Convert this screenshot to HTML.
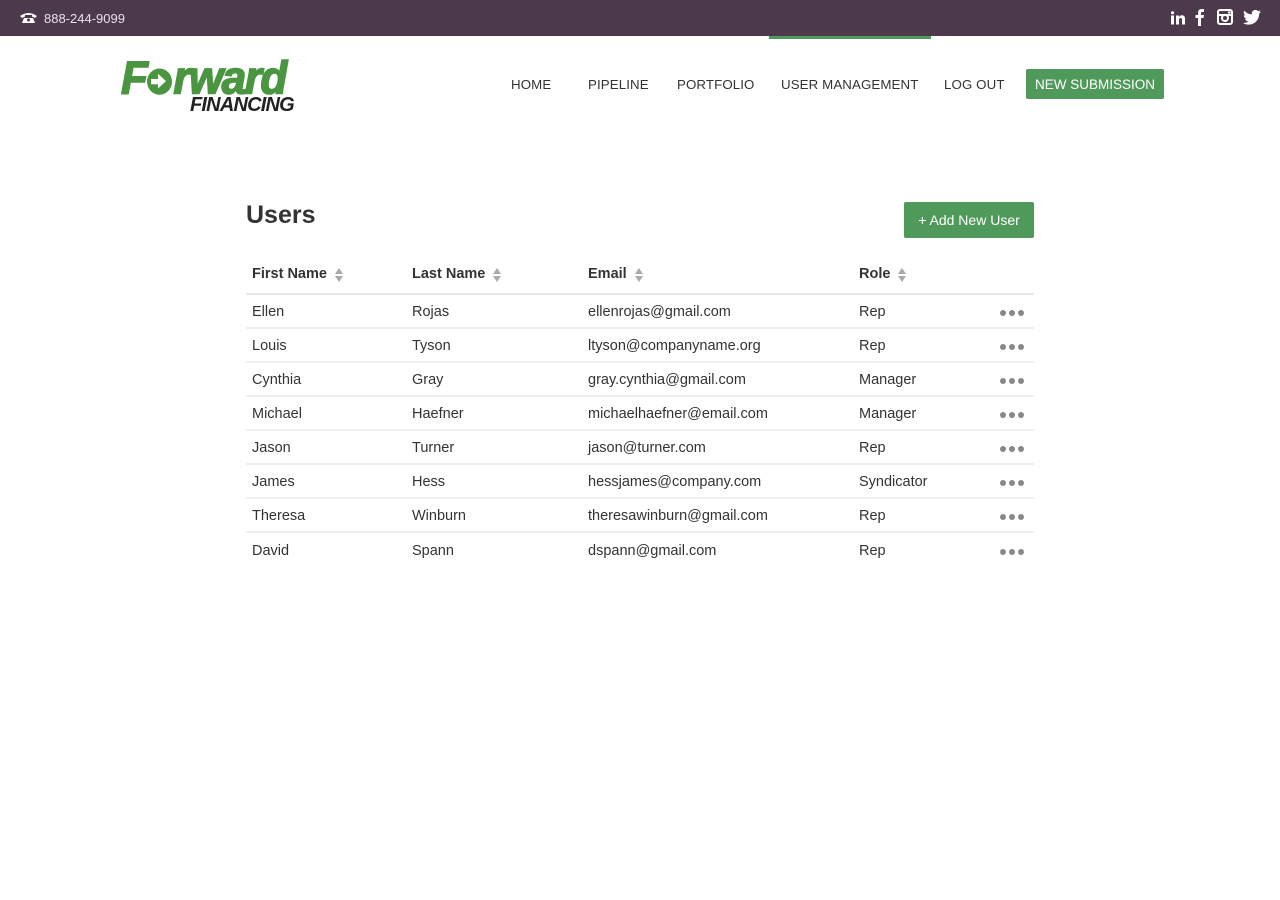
<!DOCTYPE html>
<html><head><style>
*{margin:0;padding:0;box-sizing:border-box}
body{width:1280px;height:900px;background:#fff;font-family:"Liberation Sans",sans-serif;color:#333;position:relative;overflow:hidden}
.top{position:absolute;left:0;top:0;width:1280px;height:36px;background:#4d394c;color:#e8e0e8;font-size:13px}
.abs{position:absolute}
.nav{position:absolute;top:77px;font-size:13.3px;color:#333;letter-spacing:0.1px}
table{position:absolute;left:246px;top:256px;width:788px;border-collapse:collapse;font-size:14.5px}
th{text-align:left;font-weight:bold;height:38px;padding-left:6px;border-bottom:2px solid #e6e6e6;color:#333}
td{height:34px;padding-left:6px;padding-top:2px;border-bottom:2px solid #f0f0f0;color:#333}
.s{display:inline-block;width:8px;height:16px;vertical-align:middle;margin-left:8px}
.d{text-align:right;padding-right:10px}
.dots{display:inline-flex;gap:3px}.dots i{width:6px;height:6px;border-radius:50%;background:#888;display:block}
</style></head><body>
<div class="top">
<svg class="abs" style="left:20px;top:12px" width="17" height="12" viewBox="0 0 17 12"><path d="M0 4Q8.5-2 17 4L15 6 12 4.5 12 3H5V4.5L2 6Z" fill="#fff"/><path d="M4 6H13L15 11H2Z" fill="#fff"/><circle cx="8.5" cy="8" r="1.5" fill="#4d394c"/></svg>
<span class="abs" style="left:44px;top:11px">888-244-9099</span>
<svg class="abs" style="left:1171px;top:11px" width="14" height="14" viewBox="0 0 14 14"><rect x="0" y="4.5" width="3" height="9" fill="#fff"/><circle cx="1.5" cy="1.8" r="1.6" fill="#fff"/><path d="M5 4.5H8V6Q9 4.3 11 4.3 14 4.3 14 8V13.5H11V8.5Q11 7 9.6 7 8 7 8 8.7V13.5H5Z" fill="#fff"/></svg>
<svg class="abs" style="left:1195px;top:9px" width="9" height="17" viewBox="0 0 9 17"><path d="M6 17V9H8.5L9 6H6V4.2Q6 3 7.3 3H9V.2Q8 0 6.6 0 3 0 3 3.8V6H.5V9H3V17Z" fill="#fff"/></svg>
<svg class="abs" style="left:1217px;top:9px" width="16" height="16" viewBox="0 0 16 16"><rect x="1" y="1" width="14" height="14" rx="2" fill="none" stroke="#fff" stroke-width="2"/><rect x="1" y="5" width="14" height="2" fill="#fff"/><circle cx="8" cy="9" r="3" fill="none" stroke="#fff" stroke-width="2"/><rect x="11" y="2.5" width="2.5" height="2" fill="#fff"/></svg>
<svg class="abs" style="left:1243px;top:10px" width="18" height="15" viewBox="0 0 24 20"><path d="M24 2.4a9.8 9.8 0 0 1-2.8.8A4.9 4.9 0 0 0 23.3.4a9.9 9.9 0 0 1-3.1 1.2A4.9 4.9 0 0 0 11.8 6 14 14 0 0 1 1.7.9a4.9 4.9 0 0 0 1.5 6.6A4.9 4.9 0 0 1 1 6.9 4.9 4.9 0 0 0 4.9 11.8a4.9 4.9 0 0 1-2.2.1 4.9 4.9 0 0 0 4.6 3.4A9.9 9.9 0 0 1 0 17.3 14 14 0 0 0 7.5 19.5c9 0 14-7.5 14-14v-.6A10 10 0 0 0 24 2.4z" fill="#fff"/></svg>
</div>
<div class="abs" style="left:769px;top:36px;width:162px;height:3px;background:#4f9a5a"></div>
<div class="abs" style="left:121px;top:54px;font:italic 900 44px 'Liberation Sans',sans-serif;color:#4a9640;letter-spacing:-1.5px;transform:scaleY(1.05);-webkit-text-stroke:1.5px #4a9640">F<span style="display:inline-block;width:25px;height:25px;border-radius:50%;background:#4a9640;vertical-align:-1px;margin:0 1px;position:relative"><span style="position:absolute;left:4px;top:10px;width:10px;height:5px;background:#fff"></span><span style="position:absolute;left:11px;top:5px;border-left:8px solid #fff;border-top:7.5px solid transparent;border-bottom:7.5px solid transparent"></span></span>rward</div>
<div class="abs" style="left:190px;top:94px;font:italic bold 20px 'Liberation Sans',sans-serif;color:#222;letter-spacing:-0.8px">FINANCING</div>
<span class="nav" style="left:511px">HOME</span>
<span class="nav" style="left:588px">PIPELINE</span>
<span class="nav" style="left:677px">PORTFOLIO</span>
<span class="nav" style="left:781px">USER MANAGEMENT</span>
<span class="nav" style="left:944px">LOG OUT</span>
<div class="abs" style="left:1026px;top:69px;width:138px;height:30px;background:#4f9a5a;border-radius:2px;color:#fff;font-size:13.5px;text-align:center;line-height:31px">NEW SUBMISSION</div>
<div class="abs" style="left:246px;top:201px;font-size:25px;font-weight:bold;color:#333">Users</div>
<div class="abs" style="left:904px;top:202px;width:130px;height:36px;background:#4f9a5a;border-radius:2px;color:#fff;font-size:14px;text-align:center;line-height:37px">+ Add New User</div>
<table>
<tr><th style="width:160px">First Name<svg class="s" viewBox="0 0 8 16"><path d="M4 1 8 7H0Z M4 15 0 9H8Z" fill="#aaa"/></svg></th><th style="width:176px">Last Name<svg class="s" viewBox="0 0 8 16"><path d="M4 1 8 7H0Z M4 15 0 9H8Z" fill="#aaa"/></svg></th><th style="width:271px">Email<svg class="s" viewBox="0 0 8 16"><path d="M4 1 8 7H0Z M4 15 0 9H8Z" fill="#aaa"/></svg></th><th style="width:120px">Role<svg class="s" viewBox="0 0 8 16"><path d="M4 1 8 7H0Z M4 15 0 9H8Z" fill="#aaa"/></svg></th><th></th></tr>
<tr><td>Ellen</td><td>Rojas</td><td>ellenrojas@gmail.com</td><td>Rep</td><td class="d"><span class="dots"><i></i><i></i><i></i></span></td></tr>
<tr><td>Louis</td><td>Tyson</td><td>ltyson@companyname.org</td><td>Rep</td><td class="d"><span class="dots"><i></i><i></i><i></i></span></td></tr>
<tr><td>Cynthia</td><td>Gray</td><td>gray.cynthia@gmail.com</td><td>Manager</td><td class="d"><span class="dots"><i></i><i></i><i></i></span></td></tr>
<tr><td>Michael</td><td>Haefner</td><td>michaelhaefner@email.com</td><td>Manager</td><td class="d"><span class="dots"><i></i><i></i><i></i></span></td></tr>
<tr><td>Jason</td><td>Turner</td><td>jason@turner.com</td><td>Rep</td><td class="d"><span class="dots"><i></i><i></i><i></i></span></td></tr>
<tr><td>James</td><td>Hess</td><td>hessjames@company.com</td><td>Syndicator</td><td class="d"><span class="dots"><i></i><i></i><i></i></span></td></tr>
<tr><td>Theresa</td><td>Winburn</td><td>theresawinburn@gmail.com</td><td>Rep</td><td class="d"><span class="dots"><i></i><i></i><i></i></span></td></tr>
<tr><td style="border:0">David</td><td style="border:0">Spann</td><td style="border:0">dspann@gmail.com</td><td style="border:0">Rep</td><td class="d" style="border:0"><span class="dots"><i></i><i></i><i></i></span></td></tr>
</table>
</body></html>
